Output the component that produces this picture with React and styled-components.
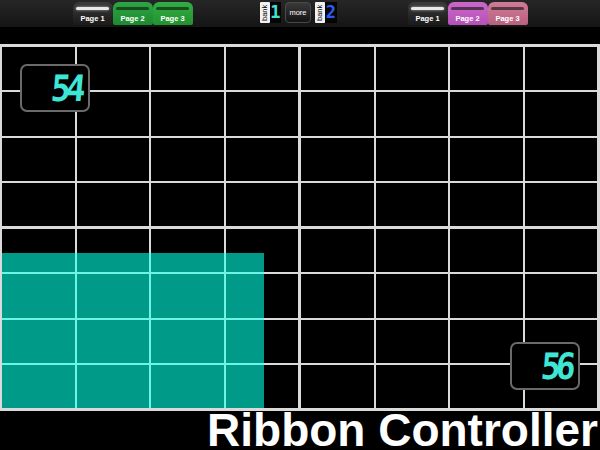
import styled, { createGlobalStyle } from "styled-components";

const GlobalStyle = createGlobalStyle`
  html, body {
    margin: 0;
    padding: 0;
    background: #000;
  }
  body {
    font-family: "Liberation Sans", Arial, sans-serif;
  }
`;

const pageTabs = [
  { label: "Page 1", variant: "active" },
  { label: "Page 2", variant: "green" },
  { label: "Page 3", variant: "green2" },
];

const rightTabs = [
  { label: "Page 1", variant: "active" },
  { label: "Page 2", variant: "pink" },
  { label: "Page 3", variant: "rose" },
];

const tabColors = {
  active: "linear-gradient(#3a3a3a, #1a1a1a)",
  green: "linear-gradient(#2ea444, #1d8a30)",
  green2: "linear-gradient(#33ad45, #22922f)",
  pink: "linear-gradient(#cc66cc, #b552b5)",
  rose: "linear-gradient(#cf7a98, #b8627f)",
};

const cells = Array.from({ length: 16 });

// ribbon value, as fractions of the quadrant
const ribbon = { x: 0.885, y: 0.866 };

export default function App() {
  return (
    <>
      <GlobalStyle />
      <Screen>
        <TopBar>
          <TabGroup>
            {pageTabs.map((t) => (
              <Tab key={t.label} $variant={t.variant}>
                <Indicator $on={t.variant === "active"} />
                <TabLabel>{t.label}</TabLabel>
              </Tab>
            ))}
          </TabGroup>
          <BankGroup>
            <BankLabel>bank</BankLabel>
            <BankDigit $color="#3fe6d6">1</BankDigit>
            <MoreButton>more</MoreButton>
            <BankLabel>bank</BankLabel>
            <BankDigit $color="#2a5cf0">2</BankDigit>
          </BankGroup>
          <TabGroup>
            {rightTabs.map((t) => (
              <Tab key={t.label} $variant={t.variant}>
                <Indicator $on={t.variant === "active"} />
                <TabLabel>{t.label}</TabLabel>
              </Tab>
            ))}
          </TabGroup>
        </TopBar>

        <Board>
          <Quadrant>
            {cells.map((_, i) => (
              <Cell key={i} />
            ))}
            <Readout $top="17px" $left="18px">
              <Digits>54</Digits>
            </Readout>
          </Quadrant>
          <Quadrant>
            {cells.map((_, i) => (
              <Cell key={i} />
            ))}
          </Quadrant>
          <Quadrant>
            {cells.map((_, i) => (
              <Cell key={i} />
            ))}
            <Fill
              style={{
                clipPath: `inset(${(1 - ribbon.y) * 100}% ${(1 - ribbon.x) * 100}% 0 0)`,
              }}
            >
              {cells.map((_, i) => (
                <FillCell key={i} />
              ))}
            </Fill>
          </Quadrant>
          <Quadrant>
            {cells.map((_, i) => (
              <Cell key={i} />
            ))}
            <Readout $bottom="18px" $right="17px">
              <Digits>56</Digits>
            </Readout>
          </Quadrant>
        </Board>

        <Title>Ribbon Controller</Title>
      </Screen>
    </>
  );
}

const Screen = styled.div`
  width: 600px;
  height: 450px;
  overflow: hidden;
  background: #000;
  display: flex;
  flex-direction: column;
`;

const TopBar = styled.div`
  height: 27px;
  margin-bottom: 17px;
  background: linear-gradient(#262626, #151515);
  display: grid;
  grid-template-columns: 120px 81px 120px;
  column-gap: 67px;
  justify-content: center;
  align-items: start;
  padding-top: 2px;
  box-sizing: border-box;
`;

const TabGroup = styled.div`
  display: flex;
`;

const Tab = styled.div`
  width: 40px;
  height: 23px;
  border-radius: 6px 6px 2px 2px;
  background: ${(p) => tabColors[p.$variant]};
  display: flex;
  flex-direction: column;
  align-items: center;
  box-sizing: border-box;
  padding-top: 5px;
`;

const Indicator = styled.div`
  width: 33px;
  height: 3px;
  border-radius: 2px;
  background: ${(p) => (p.$on ? "#e8e8e8" : "rgba(10, 20, 10, 0.6)")};
  box-shadow: ${(p) => (p.$on ? "0 0 3px rgba(255,255,255,0.6)" : "none")};
`;

const TabLabel = styled.span`
  margin-top: 4px;
  font-size: 7.5px;
  font-weight: bold;
  color: #fff;
  line-height: 9px;
`;

const BankGroup = styled.div`
  display: flex;
  align-items: flex-start;
`;

const BankLabel = styled.div`
  width: 10px;
  height: 21px;
  background: #f2f2f2;
  color: #000;
  font-size: 7.5px;
  line-height: 10px;
  writing-mode: vertical-rl;
  transform: rotate(180deg);
  text-align: center;
  border-radius: 1px;
`;

const BankDigit = styled.div`
  width: 12px;
  height: 21px;
  background: #050505;
  color: ${(p) => p.$color};
  font-family: "DejaVu Sans Mono", monospace;
  font-size: 17px;
  font-weight: bold;
  line-height: 21px;
  text-align: center;
  margin-right: 4px;
`;

const MoreButton = styled.div`
  width: 27px;
  height: 21px;
  box-sizing: border-box;
  border: 1px solid #4a4a4a;
  border-radius: 4px;
  background: linear-gradient(#3a3a3a, #141414);
  color: #fff;
  font-size: 7.5px;
  line-height: 19px;
  text-align: center;
  margin-right: 4px;
`;

const Board = styled.div`
  height: 367px;
  box-sizing: border-box;
  background: #dadada;
  padding: 3px 3px 3px 2px;
  display: grid;
  grid-template-columns: 1fr 1fr;
  grid-template-rows: 1fr 1fr;
  gap: 3px;
`;

const Quadrant = styled.div`
  position: relative;
  display: grid;
  grid-template-columns: repeat(4, 1fr);
  grid-template-rows: repeat(4, 1fr);
  gap: 2px;
`;

const Cell = styled.div`
  background: #000;
`;

const Fill = styled.div`
  position: absolute;
  inset: 0;
  display: grid;
  grid-template-columns: repeat(4, 1fr);
  grid-template-rows: repeat(4, 1fr);
  gap: 2px;
  background: #6ff3e3;
`;

const FillCell = styled.div`
  background: #009a88;
`;

const Readout = styled.div`
  position: absolute;
  top: ${(p) => p.$top || "auto"};
  left: ${(p) => p.$left || "auto"};
  bottom: ${(p) => p.$bottom || "auto"};
  right: ${(p) => p.$right || "auto"};
  width: 70px;
  height: 48px;
  box-sizing: border-box;
  border: 2px solid #6a6a6a;
  border-radius: 7px;
  background: #000;
  display: flex;
  align-items: center;
  justify-content: flex-end;
  padding-right: 7px;
`;

const Digits = styled.span`
  font-family: "DejaVu Sans Mono", monospace;
  font-size: 33px;
  font-weight: bold;
  letter-spacing: -5px;
  color: #3fe6d6;
  line-height: 1;
  transform: skewX(-5deg) scaleY(1.1);
`;

const Title = styled.div`
  height: 39px;
  line-height: 39px;
  text-align: right;
  padding-right: 2px;
  font-family: "Liberation Sans", Arial, sans-serif;
  font-weight: bold;
  font-size: 46px;
  color: #fff;
  white-space: nowrap;
`;
